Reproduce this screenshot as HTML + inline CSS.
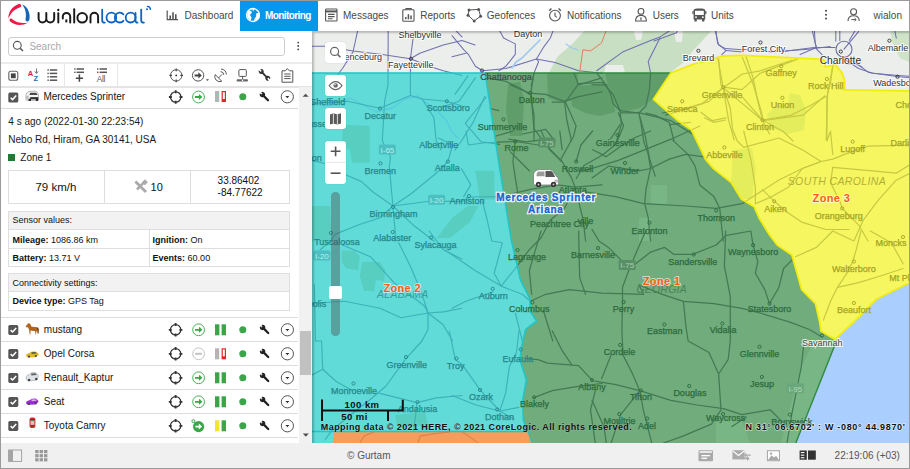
<!DOCTYPE html>
<html><head><meta charset="utf-8">
<style>
*{box-sizing:border-box;margin:0;padding:0}
html,body{width:910px;height:469px;overflow:hidden;background:#fff}
body{font-family:"Liberation Sans",sans-serif;font-size:10px;color:#333;position:relative}
.a{position:absolute}
.t{position:absolute;white-space:nowrap;line-height:10px;font-size:10px}
#frame{left:0;top:0;width:910px;height:469px;border:1px solid #9a9a9a;border-right:1px solid #9a9a9a;z-index:50;pointer-events:none}
#hdr{left:1px;top:1px;width:908px;height:30px;background:#fff}
.nav{color:#484848}
#side{left:1px;top:31px;width:311px;height:412px;background:#fff;overflow:hidden}
#map{left:312px;top:31px;width:597px;height:412px;background:#eceeec;overflow:hidden}
#foot{left:1px;top:443px;width:908px;height:25px;background:#f0f0f0}
.ln{position:absolute;background:#dcdcdc}
.cb{position:absolute;width:10px;height:10px;background:#555;border-radius:2px}
.cb svg{position:absolute;left:0;top:0}
.mbtn{position:absolute;background:#fff;border-radius:3px;box-shadow:0 0 1px rgba(0,0,0,.25)}
</style></head><body>
<div id="frame" class="a"></div>

<!-- HEADER -->
<div id="hdr" class="a">
</div>
<svg class="a" style="left:0;top:0" width="910" height="31" viewBox="0 0 910 31">
 <!-- logo mark -->
 <path d="M8.4,18.6 C8.2,11.6 12.6,6 18.8,4 C20.6,3.6 21.8,5.2 21,6.6 C20.6,7.4 19.8,7.6 19,7.8 C14,9.4 10.6,13.4 8.4,18.6 Z" fill="#ee1846"/>
 <path d="M22,4.2 C26.8,6.2 30,11.4 29.6,17.4 C29.6,19 29.2,21 27.6,21.4 C26.2,21.6 25.2,20.4 25.6,19 C26.6,14.2 25.6,8.6 22,4.2 Z" fill="#1565b8"/>
 <path d="M28.4,22.4 C22.6,25.8 15.4,26 10.2,21.6 C9.2,20.6 9.4,19 10.6,18.6 C11.4,18.4 12,18.8 12.6,19.4 C16.8,22.8 22.6,23.6 28.4,22.4 Z" fill="#ee1846"/>
 <!-- wordmark wialon -->
 <g fill="none" stroke="#1a1a1a" stroke-width="1.95" stroke-linecap="round">
  <path d="M38.6,12.9 V18.6 A3.85,3.85 0 0 0 46.3,18.6 V12.9 M46.3,18.6 A3.95,3.95 0 0 0 54.2,18.6 V12.9"/>
  <path d="M58.3,13.2 V22.4"/>
  <path d="M62.8,18.4 V16.6 A3.7,3.7 0 0 1 70.2,16.6 V22.4"/>
  <path d="M66.3,19.4 V22.4" stroke-width="2" stroke-linecap="butt"/>
  <path d="M74.2,9.2 V22.4"/>
  <circle cx="82.2" cy="17.8" r="4.8"/>
  <path d="M90.5,22.4 V16.6 A3.8,3.8 0 0 1 98.1,16.6 V22.4"/>
 </g>
 <circle cx="58.3" cy="10" r="1.15" fill="#1a1a1a"/>
 <g fill="none" stroke="#0f62c0" stroke-width="1.8" stroke-linecap="round">
  <path d="M102.2,9.6 V20.4 Q102.2,22.6 104.8,22.6"/>
  <circle cx="111.4" cy="17.6" r="4.9"/>
  <path d="M123.4,14.4 A4.9,4.9 0 1 0 123.4,20.8"/>
  <circle cx="130.6" cy="17.6" r="4.9"/>
  <path d="M135.5,12.8 V20.4 Q135.5,22.6 137.6,22.6"/>
  <path d="M141.2,9.6 V20.4 Q141.2,22.6 143.9,22.6"/>
  <path d="M147.4,6.4 A3.2,3.2 0 0 1 150.4,9.4" stroke-width="1.4"/>
 </g>
 <circle cx="147" cy="9.3" r="1" fill="#0f62c0"/>
 <!-- Dashboard icon -->
 <g fill="none" stroke="#555" stroke-width="1.2">
  <path d="M167.2,10.5 V19.6 H178"/>
  <path d="M170.2,19 V15.5 M173,19 V12.2 M175.8,19 V14.2" stroke-width="1.6"/>
 </g>
 <!-- monitoring tab -->
 <rect x="240" y="1" width="78" height="30" fill="#0597e9"/>
 <g fill="#fff">
  <circle cx="253" cy="15" r="6.5" fill="none" stroke="#fff" stroke-width="1.3"/>
  <path d="M248.6,10.6 C250,10.4 251.6,11 251.8,12.2 C252,13.4 250.6,13.6 250.2,14.6 C249.8,15.6 251,16.2 251.4,17.2 C251.6,18.2 251,19.6 250.6,20.6 C249,19.6 247.6,18 247.2,16 C247,14 247.6,12 248.6,10.6 Z"/>
  <path d="M254.6,9 C256.4,9.4 258,10.8 258.8,12.4 C258,13 257,12.6 256.4,13.4 C255.8,14.2 256.6,15.4 256,16.6 C255.6,17.6 254.6,18.2 254.4,19.4 L254,21.2 C256.8,20.8 258.8,18.6 259.4,16 C259.6,14.6 259.4,13.4 258.8,12.4 Z"/>
  <path d="M253.2,8.6 C254,8.8 254.4,9.8 253.8,10.4 C253.2,11 252.6,10.6 252.4,9.8 Z"/>
 </g>
 <!-- messages icon -->
 <g fill="none" stroke="#555" stroke-width="1.1">
  <rect x="325.6" y="9" width="11.4" height="12" rx="0.8"/>
  <path d="M325.6,11.4 H337" stroke-width="2"/>
  <path d="M328,14.4 H334.6 M328,16.6 H334.6 M328,18.8 H332.6"/>
 </g>
 <!-- reports icon -->
 <g fill="none" stroke="#555" stroke-width="1.1">
  <rect x="402.8" y="9.8" width="11.2" height="11.4" rx="0.8"/>
  <path d="M406,9.8 V8.6 H411.2 V9.8"/>
  <path d="M405.8,19.2 V17 M408.4,19.2 V14.2 M411,19.2 V15.6" stroke-width="1.5"/>
 </g>
 <!-- geofences icon -->
 <g fill="none" stroke="#555" stroke-width="1">
  <path d="M469,10 L478.6,9.4 L480.6,16.2 L474.2,21 L468,15.2 Z"/>
 </g>
 <g fill="#555">
  <circle cx="469" cy="10" r="1.5"/><circle cx="478.6" cy="9.4" r="1.5"/><circle cx="480.6" cy="16.2" r="1.5"/><circle cx="474.2" cy="21" r="1.5"/><circle cx="468" cy="15.2" r="1.5"/>
 </g>
 <!-- notifications icon -->
 <g fill="none" stroke="#555" stroke-width="1.1">
  <circle cx="555" cy="15.6" r="5.4"/>
  <path d="M555,12.6 V15.8 L556.8,17.4"/>
  <path d="M549.2,10.8 L551.4,8.6 M560.8,10.8 L558.6,8.6" stroke-width="1.4"/>
 </g>
 <!-- users icon -->
 <g fill="none" stroke="#555" stroke-width="1.1">
  <circle cx="641" cy="11.4" r="2.9"/>
  <path d="M635.6,21 C635.6,17.6 637.8,15.4 641,15.4 C644.2,15.4 646.4,17.6 646.4,21 Z"/>
 </g>
 <path d="M640.2,17.4 H641.8 L641.4,20.4 H640.6 Z" fill="#555"/>
 <!-- units icon -->
 <g fill="#555">
  <path d="M693.6,10.6 C693.6,9 695,8.6 699.4,8.6 C703.8,8.6 705.2,9 705.2,10.6 V19.4 H693.6 Z M695,10.8 V15 H703.8 V10.8 Z"/>
  <rect x="694.4" y="19" width="2.4" height="2.6" rx="0.6"/><rect x="702" y="19" width="2.4" height="2.6" rx="0.6"/>
  <rect x="692.4" y="11" width="1.2" height="3.2"/><rect x="705.2" y="11" width="1.2" height="3.2"/>
  <circle cx="696" cy="17.2" r="0.9" fill="#fff"/><circle cx="702.8" cy="17.2" r="0.9" fill="#fff"/>
 </g>
 <!-- kebab -->
 <g fill="#444"><circle cx="826" cy="10.8" r="1"/><circle cx="826" cy="14.7" r="1"/><circle cx="826" cy="18.6" r="1"/></g>
 <!-- user icon -->
 <g fill="none" stroke="#555" stroke-width="1.1">
  <circle cx="853.6" cy="11.8" r="3"/>
  <path d="M848,21 C848,17.8 850.2,15.8 853.6,15.8 C857,15.8 859.2,17.8 859.2,21"/>
  <path d="M851.4,19.6 H856 M854.6,18.2 L856.2,19.6 L854.6,21" stroke-width="1"/>
 </g>
</svg>
<div class="t nav" style="left:184.5px;top:11px">Dashboard</div>
<div class="t" style="left:265px;top:11px;color:#fff;font-weight:bold;letter-spacing:-0.6px">Monitoring</div>
<div class="t nav" style="left:343px;top:11px">Messages</div>
<div class="t nav" style="left:420.3px;top:11px">Reports</div>
<div class="t nav" style="left:486.8px;top:11px">Geofences</div>
<div class="t nav" style="left:567px;top:11px">Notifications</div>
<div class="t nav" style="left:652.7px;top:11px">Users</div>
<div class="t nav" style="left:711px;top:11px">Units</div>
<div class="t nav" style="left:873.6px;top:11px">wialon</div>

<!-- SIDEBAR -->
<div id="side" class="a">
</div>
<div class="a" style="left:8px;top:37px;width:277px;height:19px;border:1px solid #cdcdcd;border-radius:3px;background:#fff"></div>
<div class="t" style="left:29.4px;top:42px;color:#a8a8a8">Search</div>
<div class="ln" style="left:1px;top:62px;width:311px;height:2px;background:#ececec"></div>
<div class="ln" style="left:1px;top:86px;width:311px;height:1.5px;background:#e4e4e4"></div>
<div class="ln" style="left:63.5px;top:63px;width:1.2px;height:24px;background:#e6e6e6"></div>
<div class="ln" style="left:117px;top:63px;width:1.2px;height:24px;background:#e6e6e6"></div>
<div class="ln" style="left:1px;top:107.5px;width:297px;height:1px;background:#dadada"></div>
<div class="ln" style="left:1px;top:317px;width:297px;height:1px;background:#dcdcdc"></div>
<div class="ln" style="left:1px;top:341px;width:297px;height:1px;background:#dcdcdc"></div>
<div class="ln" style="left:1px;top:365px;width:297px;height:1px;background:#dcdcdc"></div>
<div class="ln" style="left:1px;top:389px;width:297px;height:1px;background:#dcdcdc"></div>
<div class="ln" style="left:1px;top:413px;width:297px;height:1px;background:#dcdcdc"></div>
<div class="ln" style="left:1px;top:437px;width:297px;height:1px;background:#dcdcdc"></div>
<div class="a" style="left:298.5px;top:87px;width:13px;height:356px;background:#f1f1f1"></div>
<div class="a" style="left:300.2px;top:331px;width:10.7px;height:43.5px;background:#c1c1c1"></div>
<div class="t" style="left:43.4px;top:92px;color:#151515">Mercedes Sprinter</div>
<div class="t" style="left:8.3px;top:117.1px;color:#1a1a1a">4 s ago (2022-01-30 22:23:54)</div>
<div class="t" style="left:8.3px;top:135px;color:#1a1a1a">Nebo Rd, Hiram, GA 30141, USA</div>
<div class="a" style="left:8.4px;top:154px;width:6.6px;height:6.6px;background:#1f7a33"></div>
<div class="t" style="left:20.3px;top:153px;color:#1a1a1a">Zone 1</div>
<div class="a" style="left:8px;top:170px;width:282px;height:34px;border:1px solid #dedede"></div>
<div class="ln" style="left:104px;top:170px;width:1px;height:34px;background:#dedede"></div>
<div class="ln" style="left:190px;top:170px;width:1px;height:34px;background:#dedede"></div>
<div class="t" style="left:35.4px;top:181.5px;font-size:11.5px;line-height:11.5px;color:#111">79 km/h</div>
<div class="t" style="left:150.6px;top:181.5px;font-size:11px;line-height:11px;color:#111">10</div>
<div class="t" style="left:217.6px;top:176.4px;color:#111">33.86402</div>
<div class="t" style="left:217.6px;top:188px;color:#111">-84.77622</div>
<div class="a" style="left:8px;top:211px;width:282px;height:56px;border:1px solid #dedede"></div>
<div class="a" style="left:9px;top:212px;width:280px;height:18px;background:#f2f2f2;border-bottom:1px solid #dedede"></div>
<div class="ln" style="left:9px;top:248px;width:280px;height:1px;background:#dedede"></div>
<div class="ln" style="left:149px;top:230px;width:1px;height:36px;background:#dedede"></div>
<div class="t" style="left:12.4px;top:215.4px;font-size:9px;color:#111">Sensor values:</div>
<div class="t" style="left:12.4px;top:234.5px;font-size:9px;color:#111"><b>Mileage:</b> 1086.86 km</div>
<div class="t" style="left:152.6px;top:234.5px;font-size:9px;color:#111"><b>Ignition:</b> On</div>
<div class="t" style="left:12.4px;top:252.5px;font-size:9px;color:#111"><b>Battery:</b> 13.71 V</div>
<div class="t" style="left:152.6px;top:252.5px;font-size:9px;color:#111"><b>Events:</b> 60.00</div>
<div class="a" style="left:8px;top:273px;width:282px;height:38px;border:1px solid #dedede"></div>
<div class="a" style="left:9px;top:274px;width:280px;height:18px;background:#f2f2f2;border-bottom:1px solid #dedede"></div>
<div class="t" style="left:12.4px;top:277.8px;font-size:9px;color:#111">Connectivity settings:</div>
<div class="t" style="left:12.4px;top:295.8px;font-size:9px;color:#111"><b>Device type:</b> GPS Tag</div>
<div class="t" style="left:43.8px;top:325.2px;color:#151515">mustang</div>
<div class="t" style="left:43.8px;top:349.2px;color:#151515">Opel Corsa</div>
<div class="t" style="left:43.8px;top:373.2px;color:#151515">Renault_Kaptur</div>
<div class="t" style="left:43.8px;top:397.2px;color:#151515">Seat</div>
<div class="t" style="left:43.8px;top:421.2px;color:#151515">Toyota Camry</div>
<svg class="a" style="left:0;top:0" width="312" height="443" viewBox="0 0 312 443">
<circle cx="17.3" cy="45.3" r="3.9" fill="none" stroke="#555" stroke-width="1.1"/><path d="M20.2,48.2 L23,51" stroke="#555" stroke-width="1.5"/>
<g fill="#444"><circle cx="298.2" cy="42.6" r="0.9"/><circle cx="298.2" cy="46" r="0.9"/><circle cx="298.2" cy="49.4" r="0.9"/></g>
<rect x="8.8" y="71.3" width="9" height="9" rx="2" fill="none" stroke="#666" stroke-width="1.1"/><rect x="10.9" y="73.4" width="4.8" height="4.8" fill="#444"/>
<text x="27.8" y="75.8" font-family="Liberation Sans" font-weight="bold" font-size="7.6" fill="#e8194a">A</text><text x="33.6" y="80.9" font-family="Liberation Sans" font-weight="bold" font-size="7.4" fill="#1a70b0">Z</text><path d="M36.5,68.4 V73 M34.8,71.4 L36.5,73.4 L38.2,71.4" fill="none" stroke="#666" stroke-width="0.9"/>
<rect x="47.4" y="69.3" width="1.4" height="1.4" fill="#555"/><rect x="49.8" y="69.25" width="7.4" height="1.5" fill="#555"/>
<rect x="47.4" y="72.7" width="1.4" height="1.4" fill="#555"/><rect x="49.8" y="72.65" width="7.4" height="1.5" fill="#555"/>
<rect x="47.4" y="76.1" width="1.4" height="1.4" fill="#555"/><rect x="49.8" y="76.05" width="7.4" height="1.5" fill="#555"/>
<rect x="47.4" y="79.5" width="1.4" height="1.4" fill="#555"/><rect x="49.8" y="79.45" width="7.4" height="1.5" fill="#555"/>
<rect x="74.2" y="68.3" width="1.4" height="1.4" fill="#555"/><rect x="76.6" y="68.25" width="7.4" height="1.5" fill="#555"/>
<rect x="97" y="68.3" width="1.4" height="1.4" fill="#555"/><rect x="99.6" y="68.25" width="7.4" height="1.5" fill="#555"/>
<rect x="74.2" y="71.6" width="1.4" height="1.4" fill="#555"/><rect x="76.6" y="71.55" width="7.4" height="1.5" fill="#555"/>
<rect x="97" y="71.6" width="1.4" height="1.4" fill="#555"/><rect x="99.6" y="71.55" width="7.4" height="1.5" fill="#555"/>
<path d="M79.4,74.6 V81.8 M75.8,78.2 H83" stroke="#444" stroke-width="1.5"/>
<text x="96.8" y="81.5" font-family="Liberation Sans" font-size="8.2" fill="#555" letter-spacing="-0.3">All</text>
<circle cx="176.2" cy="75.4" r="5.7" fill="none" stroke="#555" stroke-width="1"/><circle cx="176.2" cy="75.4" r="0.9" fill="#333"/><path d="M176.2,68.6 V71.2 M176.2,79.6 V82.2 M169.4,75.4 H172 M180.4,75.4 H183" stroke="#444" stroke-width="1.2"/>
<circle cx="198.1" cy="75.4" r="5.7" fill="none" stroke="#555" stroke-width="1"/><path d="M194.6,74.4 H198.4 V72.2 L201.8,75.4 L198.4,78.6 V76.4 H194.6 Z" fill="#444"/><path d="M206,79.2 H209 L207.5,81 Z" fill="#444"/>
<path d="M215.2,74.6 A5,5 0 0 0 221.8,81.2 Z" fill="none" stroke="#555" stroke-width="1"/><path d="M218.4,78 L222,74.4" stroke="#555" stroke-width="1"/><path d="M220.6,71.6 A3.4,3.4 0 0 1 223.8,74.8 M221,69 A6,6 0 0 1 226.4,74.4" fill="none" stroke="#555" stroke-width="1"/>
<rect x="238.9" y="69.6" width="7.4" height="6.8" rx="0.8" fill="none" stroke="#555" stroke-width="1"/><path d="M242.6,76.4 V79" stroke="#555" stroke-width="1"/><rect x="236.6" y="79.2" width="11.4" height="2.4" rx="1" fill="#666"/><rect x="242" y="79.8" width="1.2" height="1.2" fill="#fff"/>
<g transform="translate(258.6,68.8)"><path d="M1.54,0.34 A2.5,2.5 0 1 1 0.34,1.54 L2.00,3.20 L3.20,2.00 Z M10.26,11.66 A2.5,2.5 0 1 1 11.46,10.46 L9.80,8.80 L8.60,10.00 Z" fill="#333"/><path d="M3,3 L8.8,9" stroke="#333" stroke-width="1.9"/></g>
<path d="M282,70.8 H285.4 L287.4,68.6 L289.4,70.8 H292.8 V82.2 H282 Z" fill="none" stroke="#555" stroke-width="1"/><path d="M284.2,74 H290.6 M284.2,76.3 H290.6 M284.2,78.6 H290.6" stroke="#555" stroke-width="1"/>
<path d="M302.6,96.8 H308.6 L305.6,93.8 Z" fill="#505050"/><path d="M302.8,433.6 H308.8 L305.8,436.8 Z" fill="#505050"/>
<g fill="#aaa"><path d="M134.4,182.4 L136.4,180.4 L147,191 L145,193 Z"/><path d="M136,188.6 L142.6,182 L144.4,183.8 L137.8,190.4 Z"/><rect x="142.8" y="180.2" width="4.2" height="4.2" transform="rotate(45 144.9 182.3)"/></g>
<rect x="8.3" y="92.5" width="10" height="10" rx="1.6" fill="#555"/><path d="M10.600000000000001,97.7 L12.600000000000001,99.6 L16.200000000000003,95.5" fill="none" stroke="#fff" stroke-width="1.5"/>
<g stroke="#333" fill="none" stroke-width="1.3"><circle cx="175.7" cy="97" r="5.2"/><path d="M175.7,90.2 V93.2 M175.7,100.8 V103.8 M168.9,97 H171.9 M179.49999999999997,97 H182.49999999999997" stroke-width="1.8"/></g>
<circle cx="198.5" cy="97" r="5.9" fill="none" stroke="#4cae5a" stroke-width="1"/><path d="M194.9,96.1 H198.9 V94 L202.3,97 L198.9,100 V97.9 H194.9 Z" fill="#3aa648"/>
<rect x="215" y="91" width="4.2" height="11" fill="#b4b4b4"/><rect x="221.6" y="91" width="4.4" height="11" fill="#ee2222"/><rect x="222.8" y="92.2" width="2" height="6.8" fill="#fff"/>
<circle cx="242.8" cy="96.8" r="3.5" fill="#3aa648"/>
<g transform="translate(259.59999999999997,91.80000000000001)"><path d="M1.55,0.35 A2.75,2.75 0 1 1 0.35,1.55 L2.20,3.40 L3.40,2.20 Z" fill="#222"/><path d="M2.8,2.8 L8.4,8.4" stroke="#222" stroke-width="2.3" stroke-linecap="round"/></g>
<circle cx="287.3" cy="96.8" r="6.1" fill="none" stroke="#555" stroke-width="1"/><path d="M285.3,95.89999999999999 H289.3 L287.3,98.2 Z" fill="#333"/>
<rect x="8.3" y="324.90000000000003" width="10" height="10" rx="1.6" fill="#555"/><path d="M10.600000000000001,330.1 L12.600000000000001,332.00000000000006 L16.200000000000003,327.90000000000003" fill="none" stroke="#fff" stroke-width="1.5"/>
<g stroke="#333" fill="none" stroke-width="1.3"><circle cx="175.6" cy="329.8" r="5.2"/><path d="M175.6,323.0 V326.0 M175.6,333.6 V336.6 M168.8,329.8 H171.8 M179.39999999999998,329.8 H182.39999999999998" stroke-width="1.8"/></g>
<circle cx="198.6" cy="329.8" r="5.9" fill="none" stroke="#4cae5a" stroke-width="1"/><path d="M195.0,328.90000000000003 H199.0 V326.8 L202.4,329.8 L199.0,332.8 V330.7 H195.0 Z" fill="#3aa648"/>
<rect x="215" y="324.3" width="4.4" height="11" fill="#3aa648"/><rect x="221.6" y="324.3" width="4.4" height="11" fill="#3aa648"/>
<circle cx="242.8" cy="329.8" r="3.5" fill="#3aa648"/>
<g transform="translate(259.8,324.59999999999997)"><path d="M1.55,0.35 A2.75,2.75 0 1 1 0.35,1.55 L2.20,3.40 L3.40,2.20 Z" fill="#222"/><path d="M2.8,2.8 L8.4,8.4" stroke="#222" stroke-width="2.3" stroke-linecap="round"/></g>
<circle cx="287.4" cy="329.8" r="6.1" fill="none" stroke="#555" stroke-width="1"/><path d="M285.4,328.90000000000003 H289.4 L287.4,331.2 Z" fill="#333"/>
<rect x="8.3" y="348.90000000000003" width="10" height="10" rx="1.6" fill="#555"/><path d="M10.600000000000001,354.1 L12.600000000000001,356.00000000000006 L16.200000000000003,351.90000000000003" fill="none" stroke="#fff" stroke-width="1.5"/>
<g stroke="#333" fill="none" stroke-width="1.3"><circle cx="175.6" cy="353.8" r="5.2"/><path d="M175.6,347.0 V350.0 M175.6,357.6 V360.6 M168.8,353.8 H171.8 M179.39999999999998,353.8 H182.39999999999998" stroke-width="1.8"/></g>
<circle cx="198.6" cy="353.8" r="5.9" fill="none" stroke="#c4c4c4" stroke-width="1"/><rect x="195.2" y="352.8" width="6.8" height="2" fill="#c4c4c4"/>
<rect x="215" y="348.3" width="4.2" height="11" fill="#b4b4b4"/><rect x="221.6" y="348.3" width="4.4" height="11" fill="#ee2222"/><rect x="222.8" y="349.5" width="2" height="6.8" fill="#fff"/>
<circle cx="242.8" cy="353.8" r="3.5" fill="#3aa648"/>
<g transform="translate(259.8,348.59999999999997)"><path d="M1.55,0.35 A2.75,2.75 0 1 1 0.35,1.55 L2.20,3.40 L3.40,2.20 Z" fill="#222"/><path d="M2.8,2.8 L8.4,8.4" stroke="#222" stroke-width="2.3" stroke-linecap="round"/></g>
<circle cx="287.4" cy="353.8" r="6.1" fill="none" stroke="#555" stroke-width="1"/><path d="M285.4,352.90000000000003 H289.4 L287.4,355.2 Z" fill="#333"/>
<rect x="8.3" y="372.90000000000003" width="10" height="10" rx="1.6" fill="#555"/><path d="M10.600000000000001,378.1 L12.600000000000001,380.00000000000006 L16.200000000000003,375.90000000000003" fill="none" stroke="#fff" stroke-width="1.5"/>
<g stroke="#333" fill="none" stroke-width="1.3"><circle cx="175.6" cy="377.8" r="5.2"/><path d="M175.6,371.0 V374.0 M175.6,381.6 V384.6 M168.8,377.8 H171.8 M179.39999999999998,377.8 H182.39999999999998" stroke-width="1.8"/></g>
<circle cx="198.6" cy="377.8" r="5.9" fill="none" stroke="#4cae5a" stroke-width="1"/><path d="M195.0,376.90000000000003 H199.0 V374.8 L202.4,377.8 L199.0,380.8 V378.7 H195.0 Z" fill="#3aa648"/>
<rect x="215" y="372.3" width="4.4" height="11" fill="#3aa648"/><rect x="221.6" y="372.3" width="4.4" height="11" fill="#3aa648"/>
<circle cx="242.8" cy="377.8" r="3.5" fill="#3aa648"/>
<g transform="translate(259.8,372.59999999999997)"><path d="M1.55,0.35 A2.75,2.75 0 1 1 0.35,1.55 L2.20,3.40 L3.40,2.20 Z" fill="#222"/><path d="M2.8,2.8 L8.4,8.4" stroke="#222" stroke-width="2.3" stroke-linecap="round"/></g>
<circle cx="287.4" cy="377.8" r="6.1" fill="none" stroke="#555" stroke-width="1"/><path d="M285.4,376.90000000000003 H289.4 L287.4,379.2 Z" fill="#333"/>
<rect x="8.3" y="396.90000000000003" width="10" height="10" rx="1.6" fill="#555"/><path d="M10.600000000000001,402.1 L12.600000000000001,404.00000000000006 L16.200000000000003,399.90000000000003" fill="none" stroke="#fff" stroke-width="1.5"/>
<g stroke="#333" fill="none" stroke-width="1.3"><circle cx="175.6" cy="401.8" r="5.2"/><path d="M175.6,395.0 V398.0 M175.6,405.6 V408.6 M168.8,401.8 H171.8 M179.39999999999998,401.8 H182.39999999999998" stroke-width="1.8"/></g>
<circle cx="198.6" cy="401.8" r="5.9" fill="none" stroke="#4cae5a" stroke-width="1"/><path d="M195.0,400.90000000000003 H199.0 V398.8 L202.4,401.8 L199.0,404.8 V402.7 H195.0 Z" fill="#3aa648"/>
<rect x="215" y="396.3" width="4.4" height="11" fill="#3aa648"/><rect x="221.6" y="396.3" width="4.4" height="11" fill="#3aa648"/>
<circle cx="242.8" cy="401.8" r="3.5" fill="#3aa648"/>
<g transform="translate(259.8,396.59999999999997)"><path d="M1.55,0.35 A2.75,2.75 0 1 1 0.35,1.55 L2.20,3.40 L3.40,2.20 Z" fill="#222"/><path d="M2.8,2.8 L8.4,8.4" stroke="#222" stroke-width="2.3" stroke-linecap="round"/></g>
<circle cx="287.4" cy="401.8" r="6.1" fill="none" stroke="#555" stroke-width="1"/><path d="M285.4,400.90000000000003 H289.4 L287.4,403.2 Z" fill="#333"/>
<rect x="8.3" y="420.90000000000003" width="10" height="10" rx="1.6" fill="#555"/><path d="M10.600000000000001,426.1 L12.600000000000001,428.00000000000006 L16.200000000000003,423.90000000000003" fill="none" stroke="#fff" stroke-width="1.5"/>
<g stroke="#333" fill="none" stroke-width="1.3"><circle cx="175.6" cy="425.8" r="5.2"/><path d="M175.6,419.0 V422.0 M175.6,429.6 V432.6 M168.8,425.8 H171.8 M179.39999999999998,425.8 H182.39999999999998" stroke-width="1.8"/></g>
<circle cx="198.6" cy="426.6" r="5.6" fill="#3aa648"/><path d="M195.4,425.7 H198.79999999999998 V423.6 L202.2,426.6 L198.79999999999998,429.6 V427.5 H195.4 Z" fill="#fff"/><circle cx="193.4" cy="421.2" r="1.5" fill="none" stroke="#3aa648" stroke-width="1"/><path d="M194.4,422.2 L196,423.8" stroke="#3aa648" stroke-width="1"/>
<rect x="215" y="420.3" width="4.4" height="11" fill="#f2e62a"/><rect x="221.6" y="420.3" width="4.4" height="11" fill="#3aa648"/>
<circle cx="242.8" cy="425.8" r="3.5" fill="#3aa648"/>
<g transform="translate(259.8,420.59999999999997)"><path d="M1.55,0.35 A2.75,2.75 0 1 1 0.35,1.55 L2.20,3.40 L3.40,2.20 Z" fill="#222"/><path d="M2.8,2.8 L8.4,8.4" stroke="#222" stroke-width="2.3" stroke-linecap="round"/></g>
<circle cx="287.4" cy="425.8" r="6.1" fill="none" stroke="#555" stroke-width="1"/><path d="M285.4,424.90000000000003 H289.4 L287.4,427.2 Z" fill="#333"/>
</svg>

<svg class="a" style="left:0;top:0" width="60" height="443" viewBox="0 0 60 443">
 <!-- van (mercedes) -->
 <g transform="translate(25.2,90.5)">
  <path d="M0.6,6.4 C0.6,3 2,1.2 5,0.8 L9.6,0.6 C11.2,0.6 12.2,1.6 12.8,3 L13.4,5.6 L13.4,8.6 C13.4,9.4 12.8,9.8 12,9.8 L1.6,9.8 C0.9,9.8 0.6,9 0.6,8 Z" fill="#f4f4f4" stroke="#8a8a8a" stroke-width="0.6"/>
  <path d="M5,2.2 L11.2,2.2 L12.4,4.6 L4.2,4.6 Z" fill="#4a4a4a"/>
  <path d="M1,5.4 L3.4,5 L3.4,9 L1,8.4 Z" fill="#bdbdbd"/>
  <rect x="5" y="6.6" width="8" height="2.2" fill="#333"/>
  <rect x="3.4" y="8.2" width="2.4" height="2.2" fill="#222"/><rect x="10.6" y="8.2" width="2.4" height="2.2" fill="#222"/>
 </g>
 <!-- horse -->
 <g transform="translate(25.4,323)">
  <path d="M0.2,3.4 L2.6,0.6 C3.4,0 4.4,0.4 5,1.2 L6,3.6 C7.6,4.2 10,4 11.6,4.2 C12.8,4.4 13.4,5.4 13.2,7 L13,10.6 L12.2,10.6 L12,7.8 L11,8.4 L10.6,11.4 L9.8,11.4 L9.8,8 C8,8.2 6.4,8 5.2,7.6 L5,11.4 L4.2,11.4 L3.8,7.2 C3.2,6 3,5 2.6,4.2 L1.2,4.6 Z" fill="#b0641c"/>
  <path d="M11.6,4.4 C12.6,4.6 13.2,5.6 13.2,7 L13,10.6 L12.4,10.6 L12.2,6.6 Z" fill="#5a2e0a"/>
  <rect x="4.2" y="10.2" width="1" height="1.2" fill="#ddd"/><rect x="9.8" y="10.2" width="1" height="1.2" fill="#ddd"/>
 </g>
 <!-- yellow car -->
 <g transform="translate(25.8,351)">
  <path d="M0.4,4.2 C0.4,3 2,2.2 4,1.8 L6,0.6 L10,0.6 L12.6,2.4 C13,3 13,4 12.4,4.6 L9,6.2 L2.6,6.4 C1,6.2 0.4,5.4 0.4,4.2 Z" fill="#e0b830"/>
  <path d="M5.6,1.2 L9.6,1 L11,2.6 L6,3 Z" fill="#5a5a5a"/>
  <circle cx="3.2" cy="5.6" r="1.1" fill="#444"/><circle cx="10" cy="5" r="1.1" fill="#444"/>
 </g>
 <!-- gray car -->
 <g transform="translate(25.7,372)">
  <path d="M0.4,5.6 C0.4,4 1.6,3 3.6,2.6 L5.6,0.8 L9.8,0.6 L12,2.4 C12.8,3 12.8,4.4 12.2,5.6 L11,8 L3,9 C1,8.8 0.4,7.4 0.4,5.6 Z" fill="#dfe3e8" stroke="#8a8e94" stroke-width="0.5"/>
  <path d="M5.4,1.4 L9.6,1.2 L11.2,3 L5.6,3.6 Z" fill="#606468"/>
  <circle cx="3.4" cy="8" r="1.3" fill="#444"/><circle cx="10.6" cy="7" r="1.3" fill="#444"/>
 </g>
 <!-- purple car -->
 <g transform="translate(25.7,398)">
  <path d="M0.4,4.6 C0.4,3.4 2,2.6 4,2.2 L6,0.8 L10,0.6 L12.4,2.4 C12.8,3 12.8,4 12.2,4.6 L9,6.4 L2.6,6.8 C1,6.6 0.4,5.8 0.4,4.6 Z" fill="#9a2ad0"/>
  <path d="M5.6,1.4 L9.6,1.2 L11,2.8 L6,3.2 Z" fill="#d8b0f0"/>
  <circle cx="3.2" cy="6" r="1.1" fill="#444"/><circle cx="10" cy="5.4" r="1.1" fill="#444"/>
 </g>
 <!-- red car top -->
 <g transform="translate(29.5,417.5)">
  <rect x="0" y="0" width="5.9" height="10.5" rx="2" fill="#d42a1e"/>
  <rect x="1" y="2.6" width="3.9" height="5.2" fill="#f2b8b0"/>
  <rect x="1" y="1.6" width="3.9" height="1.6" fill="#2a5a3a"/><rect x="1" y="7.4" width="3.9" height="1.4" fill="#2a5a3a"/>
 </g>
</svg>
<!-- MAP -->
<div id="map" class="a">
<svg class="a" style="left:0;top:0" width="597" height="412" viewBox="312 31 597 412">
<defs>
<clipPath id="cT"><polygon points="300.0,73.0 485.2,73.0 498.4,160.0 511.3,240.0 520.5,280.0 529.9,298.8 530.4,311.6 536.7,321.0 525.6,329.5 521.3,348.3 520.0,360.0 526.4,380.0 522.7,400.0 523.4,420.0 527.6,432.0 531.3,443.0 531.3,460.0 300.0,460.0"/></clipPath>
<clipPath id="cG"><polygon points="485.2,73.0 671.3,73.0 653.4,99.4 677.7,120.6 691.5,130.0 705.6,159.4 713.3,168.4 731.2,182.5 741.4,199.1 754.2,206.8 759.3,218.3 769.6,235.0 777.3,245.2 791.9,255.0 797.4,274.4 801.6,289.6 815.4,303.5 819.6,321.5 821.0,331.2 834.9,339.5 836.8,340.2 795.8,443.0 790.0,460.0 531.3,460.0 531.3,443.0 527.6,432.0 523.4,420.0 522.7,400.0 526.4,380.0 520.0,360.0 521.3,348.3 525.6,329.5 536.7,321.0 530.4,311.6 529.9,298.8 520.5,280.0 511.3,240.0 498.4,160.0 485.2,73.0"/></clipPath>
<clipPath id="cY"><polygon points="671.0,72.8 693.0,64.3 723.0,56.0 742.4,55.3 818.7,59.1 824.2,60.0 825.4,67.0 835.2,64.6 842.2,73.2 844.5,80.2 844.5,89.8 920.0,91.0 920.0,280.0 907.0,284.0 876.4,299.3 854.3,321.5 834.9,339.5 834.9,339.5 821.0,331.2 819.6,321.5 815.4,303.5 801.6,289.6 797.4,274.4 791.9,255.0 777.3,245.2 769.6,235.0 759.3,218.3 754.2,206.8 741.4,199.1 731.2,182.5 713.3,168.4 705.6,159.4 691.5,130.0 677.7,120.6 653.4,99.4"/></clipPath>
<g id="rd" fill="none" stroke-linejoin="round" stroke-linecap="round"><polyline points="388.2,25.0 388.0,85.0 384.6,101.3 382.3,141.0 390.5,156.8 389.3,166.2 392.9,206.0 395.2,231.8 395.2,241.0"/><polyline points="358.9,25.0 353.0,52.0 342.5,68.5 339.0,73.0 330.0,90.0"/><polyline points="305.0,46.2 326.0,46.2 353.0,51.0 382.3,54.4 410.4,58.7 419.8,53.3 443.2,45.0 462.0,40.4 475.0,45.0"/><polyline points="410.4,58.7 412.8,40.4 416.3,25.0"/><polyline points="410.4,58.7 410.4,94.3"/><polyline points="410.4,58.7 429.2,66.2 443.2,70.8 462.0,75.5"/><polyline points="450.3,25.0 462.0,36.9"/><polyline points="305.0,103.7 347.2,101.3 380.0,108.3 410.4,95.5 422.1,99.0 433.9,117.7 436.2,141.0 441.0,150.0"/><polyline points="422.1,99.0 446.8,101.3 462.0,106.0"/><polyline points="347.2,175.5 361.2,181.4 373.0,192.0 392.9,206.0"/><polyline points="305.0,159.1 326.0,163.8 347.2,175.5"/><polyline points="392.9,206.0 410.4,194.3 436.2,173.2 447.9,161.5 452.6,145.0 438.6,138.0"/><polyline points="392.9,206.0 429.2,201.3 462.0,201.3 470.7,197.0 498.9,196.6"/><polyline points="392.9,206.0 380.0,217.7 358.9,224.7 335.4,234.1 330.7,241.0 320.0,250.0"/><polyline points="392.9,206.0 412.8,224.7 433.9,241.0"/><polyline points="342.5,245.0 370.6,256.8 394.0,282.6 424.5,306.0 428.0,313.0"/><polyline points="398.7,242.7 410.4,266.2 422.1,294.3 428.0,313.0"/><polyline points="305.0,303.7 344.8,301.3 380.0,308.3 401.0,317.7 428.0,313.0 443.2,311.9 462.0,308.3"/><polyline points="428.0,313.0 428.0,329.4 421.9,341.0 405.1,359.7 386.0,386.0 369.3,400.3 347.8,417.0 331.1,431.3 325.0,440.0"/><polyline points="428.0,313.0 443.2,324.7 452.6,341.0"/><polyline points="429.2,231.0 443.2,249.7 462.0,259.1"/><polyline points="314.3,284.9 315.5,341.0 321.6,341.0 322.7,369.2 305.0,378.8"/><polyline points="322.7,369.2 335.9,381.2 352.6,390.7"/><polyline points="378.9,393.1 417.1,402.6 436.2,397.9 462.0,395.5"/><polyline points="449.3,331.0 455.3,359.7 462.0,364.4 480.7,390.7 499.8,411.0"/><polyline points="417.1,402.6 412.3,443.0"/><polyline points="466.0,131.0 468.4,145.0 484.8,142.7 515.3,141.5 538.7,145.0 545.7,142.7"/><polyline points="475.4,77.9 459.0,101.3 445.0,106.0"/><polyline points="484.8,96.6 473.1,122.4 461.4,141.0 455.0,150.0"/><polyline points="461.4,168.5 470.7,184.9 463.7,196.6"/><polyline points="482.5,201.3 487.2,220.0 491.8,241.0 502.4,242.7 494.2,273.2 501.2,286.1"/><polyline points="445.0,250.0 475.4,270.8 501.2,286.1 515.3,268.5 529.3,249.7 541.0,238.0 550.4,220.0 564.5,208.3 575.0,187.2"/><polyline points="501.2,286.1 522.3,294.3 530.5,301.3 545.7,294.3 569.2,289.6 602.0,293.1 643.6,294.3"/><polyline points="452.0,308.3 466.0,301.3 493.0,291.9"/><polyline points="515.3,313.0 522.3,341.0"/><polyline points="543.4,310.7 552.8,341.0"/><polyline points="518.9,331.0 516.5,352.5 509.3,366.8 505.7,393.1 499.8,411.0"/><polyline points="452.0,395.5 475.9,405.0 499.8,411.0 518.9,407.4"/><polyline points="499.8,411.0 514.1,419.4"/><polyline points="452.0,35.7 463.7,49.7 468.4,54.4 475.4,66.2 482.5,70.8 505.9,68.5 536.4,59.1 555.1,62.6 578.6,70.8 602.0,73.2"/><polyline points="452.0,56.8 466.0,53.3"/><polyline points="496.5,25.0 503.6,38.0 515.3,43.9 515.3,54.4 505.9,66.2 498.9,70.8"/><polyline points="536.4,59.1 543.4,47.4 550.4,38.0 555.1,25.0"/><polyline points="536.4,59.1 538.7,61.5 534.0,73.0 530.5,94.3 534.0,115.4 534.0,141.0"/><polyline points="596.7,70.8 622.5,52.1 650.6,40.4 660.0,36.9 678.7,25.0"/><polyline points="650.6,73.0 648.2,61.5 652.9,52.1 660.0,38.0"/><polyline points="713.9,25.0 718.6,45.0 725.6,48.6 742.0,49.7 778.9,52.1 814.0,47.4 835.1,47.4"/><polyline points="814.0,25.0 815.2,42.7 816.4,47.4 800.0,54.4"/><polyline points="839.8,25.0 839.8,40.4"/><polyline points="858.6,25.0 849.2,40.4"/><polyline points="844.5,59.1 858.6,68.5 872.6,73.2 898.4,75.5 915.0,76.7"/><polyline points="846.9,63.8 856.2,63.8 862.1,67.3"/><polyline points="510.6,84.9 529.3,93.1 545.7,94.3 564.5,101.3 578.6,96.6 602.0,91.9"/><polyline points="564.5,101.3 566.8,120.0 571.5,141.0"/><polyline points="573.9,73.0 578.6,84.9 602.0,77.9"/><polyline points="541.0,131.0 550.4,149.7 562.1,161.5 571.5,177.9 575.0,187.2 578.6,201.3 583.2,220.0 585.6,241.0"/><polyline points="515.3,141.5 512.9,161.5 515.3,177.9 517.6,191.9"/><polyline points="501.2,196.6 529.3,189.6 557.5,184.9 575.0,187.2 602.0,184.9"/><polyline points="576.2,161.5 580.9,145.0 592.6,131.0"/><polyline points="592.6,149.7 602.0,154.4 606.1,156.8 622.5,145.0 634.2,138.0 650.6,131.0"/><polyline points="510.6,152.1 522.3,163.8 529.3,170.8"/><polyline points="559.8,131.0 562.1,149.7"/><polyline points="596.7,73.0 606.1,84.9 610.7,94.3 613.1,103.7 620.1,110.7 621.3,124.7 616.6,141.0"/><polyline points="592.0,84.9 606.1,84.9"/><polyline points="620.1,110.7 638.9,113.0 645.9,106.0 649.4,89.6 650.6,73.0"/><polyline points="645.9,113.0 655.3,115.4 669.3,122.4 674.0,141.0 672.9,140.4 688.1,154.4 695.1,166.2 699.8,184.9 713.9,196.6 719.7,208.3 723.2,241.0"/><polyline points="638.9,113.0 641.2,124.7 643.6,141.0 648.2,154.4 650.6,168.5 645.9,189.6 644.7,203.7 648.2,217.7 650.6,241.0"/><polyline points="620.1,124.7 610.7,138.8"/><polyline points="669.3,124.7 690.4,122.4"/><polyline points="592.0,177.9 608.4,166.2 638.9,170.8 650.6,168.5 669.3,159.1 685.7,154.4 704.5,156.8"/><polyline points="585.6,191.9 615.4,196.6 643.6,203.7 685.7,206.0 716.2,208.3 742.0,203.7 778.9,180.0 802.3,168.5 821.1,161.5"/><polyline points="592.0,229.4 599.0,241.0 608.4,247.4 620.1,259.1 629.5,268.5 622.5,287.2 622.5,301.3 621.9,331.0 623.0,354.9 632.6,374.0 639.8,390.7 643.3,409.8 651.7,443.0"/><polyline points="629.5,268.5 650.6,252.1 664.7,247.4 674.0,254.4 692.8,254.4 716.2,245.0 725.6,235.7 750.8,231.0 753.1,245.1 757.8,261.5 755.4,273.2 764.8,289.6 769.5,303.7"/><polyline points="629.5,268.5 636.5,252.1 643.6,235.7 645.9,231.0"/><polyline points="643.6,294.3 638.9,284.9 662.3,294.3 683.4,301.3 713.9,303.7 742.0,308.3 760.1,313.0 790.6,322.4 809.4,329.5 821.1,336.5"/><polyline points="683.4,301.3 685.7,324.7 688.1,341.0 709.0,352.5 718.6,374.0 721.0,409.8 711.4,424.1 682.8,436.1 663.6,443.0"/><polyline points="725.6,231.0 724.4,266.2 730.3,296.6 730.3,341.0 728.1,359.7 718.6,374.0"/><polyline points="611.1,354.9 601.6,378.8"/><polyline points="595.0,381.2 615.9,384.7 639.8,390.7 670.8,400.3 697.1,405.0 723.4,408.6 742.0,414.6 770.2,409.8 779.8,419.4 787.0,426.6"/><polyline points="639.8,390.7 620.7,414.6 611.1,443.0"/><polyline points="592.0,400.3 603.9,426.5 606.3,443.0"/><polyline points="526.0,358.5 538.0,359.7 547.5,363.2 578.6,365.6 592.9,381.2"/><polyline points="552.3,331.0 561.9,350.1 571.4,364.4"/><polyline points="533.2,397.9 552.3,390.7 581.0,385.9 602.0,383.5"/><polyline points="595.3,390.7 590.5,409.8 595.3,443.0"/><polyline points="578.6,231.0 579.7,277.9 585.6,294.3"/><polyline points="541.0,231.0 529.3,270.8 531.7,294.3"/><polyline points="792.9,259.1 783.6,268.5 778.9,287.3 769.5,303.7"/><polyline points="803.7,345.3 801.3,366.8 796.5,390.7 791.7,414.6 787.0,443.0"/><polyline points="746.3,417.0 732.0,426.6"/><polyline points="718.6,59.1 720.9,84.9 723.2,87.2 730.3,108.3 732.6,129.4 737.3,141.0 743.7,147.4"/><polyline points="662.3,113.0 685.7,108.3 709.2,101.3 723.2,87.2 742.0,89.6 760.1,73.2 797.6,59.1"/><polyline points="704.5,117.7 713.9,122.4 725.6,120.0"/><polyline points="746.1,56.8 753.1,77.9 757.8,101.3 762.5,120.1 769.5,134.1"/><polyline points="742.0,96.6 762.5,120.1 790.6,115.4 809.4,106.0 825.8,96.6"/><polyline points="832.8,65.0 830.5,82.6 826.9,96.6 826.9,141.0 830.5,131.0 832.8,154.4"/><polyline points="762.5,120.1 783.6,131.8 793.0,141.0"/><polyline points="743.7,147.4 778.9,138.0 802.3,149.8 821.1,161.5 832.8,159.1 844.5,154.4 868.0,146.2 915.0,145.0"/><polyline points="821.1,161.5 802.3,168.5 788.3,187.3 771.9,196.6 755.4,203.7"/><polyline points="832.8,167.3 872.6,170.8 896.1,173.2 915.0,161.5"/><polyline points="832.8,167.3 830.5,182.6 839.8,201.3 842.2,208.4 858.6,224.8 868.0,241.0"/><polyline points="915.0,170.8 896.1,180.2 877.3,201.3 863.3,220.1 853.9,241.0 832.8,231.0 816.4,247.4 795.3,256.8"/><polyline points="762.5,189.6 774.2,201.3 788.3,213.0 802.3,222.4 825.8,229.5 849.2,229.5"/><polyline points="743.7,131.0 750.8,159.1 755.4,187.3 755.4,203.7"/><polyline points="860.9,231.0 856.2,249.8 852.7,261.5 846.9,273.2 837.5,287.3 830.5,301.3 823.4,320.1"/><polyline points="837.5,287.3 858.6,282.6 882.0,275.5 903.1,268.5"/><polyline points="870.3,231.0 891.4,242.7 903.1,263.8"/><polyline points="487.1,77.8 505.9,81.4 522.3,89.5 529.3,94.2"/><polyline points="522.3,134.0 545.7,129.4 555.0,141.0"/><polyline points="489.5,108.3 498.8,110.6"/><polyline points="531.2,94.3 533.9,128.6 549.7,149.7 561.6,161.6"/><polyline points="552.3,102.2 565.5,102.2 576.1,126.0 573.5,136.5 560.3,160.3"/><polyline points="565.5,102.2 578.7,83.7 602.5,82.4 613.0,94.3 621.0,112.8 639.4,112.8 650.0,115.4"/><polyline points="618.3,112.8 623.6,126.0 615.7,144.4 602.5,155.0 584.0,165.5 576.1,178.7"/><polyline points="639.4,115.4 644.7,133.9 650.0,160.3 655.2,176.1"/><polyline points="650.0,115.4 671.1,120.7 692.2,133.9"/><polyline points="584.0,170.8 618.3,160.3 671.1,139.2 700.0,126.0"/><polyline points="508.8,139.2 526.0,141.8 547.1,139.2"/><polyline points="494.3,136.5 512.8,131.2"/><polyline points="533.9,73.0 531.2,86.4"/><polyline points="467.9,75.8 455.0,94.3"/><polyline points="486.4,97.0 465.3,123.3 481.1,141.8 499.6,144.4"/><polyline points="715.0,25.0 717.7,43.7 726.0,50.6 742.4,52.0"/><polyline points="726.0,50.6 721.8,54.7"/><polyline points="770.0,52.0 808.4,49.2 830.3,46.5"/><polyline points="811.0,25.0 816.6,49.2 822.0,54.7"/><polyline points="844.0,49.2 857.8,32.7 862.0,25.0"/><polyline points="835.8,25.0 835.8,41.0"/><polyline points="852.3,60.2 868.8,72.6 899.0,76.7 915.0,78.0"/><polyline points="893.5,25.0 896.3,38.2"/><polyline points="654.0,41.0 676.5,32.7 680.0,25.0"/><polyline points="723.2,87.7 717.7,57.5"/><polyline points="723.2,87.7 742.4,74.0 759.0,71.2 791.9,60.2"/><polyline points="723.2,87.7 739.7,101.4 763.0,120.7"/><polyline points="742.4,57.5 753.4,85.0 761.6,112.4 763.0,120.7"/><polyline points="763.0,120.7 802.9,115.2 824.8,95.9"/><polyline points="833.0,65.7 827.6,93.2 826.2,140.0"/><polyline points="665.5,115.2 701.2,104.2 723.2,87.7"/><polyline points="723.2,87.7 728.7,120.7 734.2,140.0"/><polyline points="701.2,112.4 712.2,120.7 726.0,117.9"/></g>
</defs>
<rect x="312" y="31" width="597" height="412" fill="#eceeec"/>
<polygon points="548.8,73.0 557.6,56.4 573.0,43.2 584.0,31.0 711.4,31.0 693.8,49.8 682.9,63.0 669.7,73.0" fill="#c9dfc3"/>
<polygon points="606,65 623,65 625,73 604,73" fill="#eceeec"/><polygon points="634,31 643,31 641,40 636,40" fill="#eceeec"/><polygon points="674,31 683,31 682,42 676,42" fill="#eceeec"/>
<polygon points="890,31 909,31 909,62 900,58 893,45" fill="#cfe3c8"/>
<use href="#rd" stroke="#7070b0" stroke-width="1.05"/>
<circle cx="844" cy="49.2" r="8" fill="none" stroke="#6c6ca6" stroke-width="1.1"/>
<polyline points="606,31 601.5,43 590.5,50.9 582.9,49.8 579.6,73" fill="none" stroke="#e0805a" stroke-width="1"/>
<polygon points="836.8,340.2 795.8,443.0 920.0,443.0 920.0,270.0 907.0,284.0 876.4,299.3 854.3,321.5 834.9,339.5" fill="#aacefe"/>
<polygon points="300.0,73.0 485.2,73.0 498.4,160.0 511.3,240.0 520.5,280.0 529.9,298.8 530.4,311.6 536.7,321.0 525.6,329.5 521.3,348.3 520.0,360.0 526.4,380.0 522.7,400.0 523.4,420.0 527.6,432.0 531.3,443.0 531.3,460.0 300.0,460.0" fill="#60dbd8"/>
<polygon points="485.2,73.0 671.3,73.0 653.4,99.4 677.7,120.6 691.5,130.0 705.6,159.4 713.3,168.4 731.2,182.5 741.4,199.1 754.2,206.8 759.3,218.3 769.6,235.0 777.3,245.2 791.9,255.0 797.4,274.4 801.6,289.6 815.4,303.5 819.6,321.5 821.0,331.2 834.9,339.5 836.8,340.2 795.8,443.0 790.0,460.0 531.3,460.0 531.3,443.0 527.6,432.0 523.4,420.0 522.7,400.0 526.4,380.0 520.0,360.0 521.3,348.3 525.6,329.5 536.7,321.0 530.4,311.6 529.9,298.8 520.5,280.0 511.3,240.0 498.4,160.0 485.2,73.0" fill="#70ac7c"/>
<polygon points="671.0,72.8 693.0,64.3 723.0,56.0 742.4,55.3 818.7,59.1 824.2,60.0 825.4,67.0 835.2,64.6 842.2,73.2 844.5,80.2 844.5,89.8 920.0,91.0 920.0,280.0 907.0,284.0 876.4,299.3 854.3,321.5 834.9,339.5 834.9,339.5 821.0,331.2 819.6,321.5 815.4,303.5 801.6,289.6 797.4,274.4 791.9,255.0 777.3,245.2 769.6,235.0 759.3,218.3 754.2,206.8 741.4,199.1 731.2,182.5 713.3,168.4 705.6,159.4 691.5,130.0 677.7,120.6 653.4,99.4" fill="#f6f660"/>
<g fill="#58ceC0"><polygon points="342.4,124.4 369.6,126 369.6,162.8 352,162.8 350,150 342.4,146"/><polygon points="341.7,251 354,250.6 359.8,256 358,270.4 346,268 341.7,262"/><polygon points="362,262 380,262 385.3,270 384,281 376,280 374,291 364,291 359.8,276"/><polygon points="475.2,170.8 494.4,170.8 494.4,199.6 480,199.6"/><polygon points="436.8,238 452,218 468,206 478.4,206 470,222 450,238"/><polygon points="312,206 330,206 332,241 312,241"/><polygon points="395,415 425,412 428,425 398,428"/></g>
<g fill="#5f9d6b"><polygon points="547,73 578,73 578,84 574,100 560,102 548,98"/><polygon points="571,86 613,84 615,112 600,116 585,113 572,106"/><polygon points="605,73 671,73 660,88 653,99 640,108 622,112 612,100 608,86"/><polygon points="508,84 520,82 524,100 522,136 510,136 506,110"/></g>
<g fill="#78b686"><polygon points="650.6,184.9 667,184.9 667,203.7 650.6,203.7"/><polygon points="638.9,217.7 650.6,217.7 650.6,241 638.9,241"/><polygon points="716,421 742,420 750,443 716,443"/><polygon points="812,345 836,341 796,443 781,443 792,400 801,368"/></g>
<g fill="#e4ee5c"><polygon points="790,93 800,95 806,110 804,130 788,134 770,128 767,115 775,106 788,103"/><polygon points="733,150 752,148 756,170 752,199 742,199 731,182"/></g>
<g fill="none" stroke-linecap="round" stroke-linejoin="round">
<polyline points="322,106 336,104 350,98 362,104 376,112 392,108 405,99 418,96 428,104 438,112 446,120 452,132 458,138" stroke="#52c4e0" stroke-width="1.3" opacity="0.7" clip-path="url(#cT)"/>
<polyline points="540,40 528,52 522,58 516,62 512,68" stroke="#9cc8f0" stroke-width="1.6"/>
<polyline points="566,44 572,48 578,50" stroke="#9cc8f0" stroke-width="1.2"/>
</g>
<use href="#rd" stroke="#3cb2b8" stroke-width="1.15" clip-path="url(#cT)"/>
<use href="#rd" stroke="#447a53" stroke-width="1.25" clip-path="url(#cG)"/>
<use href="#rd" stroke="#c8c842" stroke-width="1.2" clip-path="url(#cY)"/>
<polyline points="312.0,73.0 485.2,73.0 498.4,160.0 511.3,240.0 520.5,280.0 529.9,298.8 530.4,311.6 536.7,321.0 525.6,329.5 521.3,348.3 520.0,360.0 526.4,380.0 522.7,400.0 523.4,420.0 527.6,432.0 531.3,443.0" fill="none" stroke="#22c4c4" stroke-width="1.6"/>
<polyline points="485.2,73.0 671.3,73.0" fill="none" stroke="#2e8a3e" stroke-width="1.4"/>
<polyline points="836.8,340.2 795.8,443.0" fill="none" stroke="#2e8a3e" stroke-width="1.4"/>
<polygon points="671.0,72.8 693.0,64.3 723.0,56.0 742.4,55.3 818.7,59.1 824.2,60.0 825.4,67.0 835.2,64.6 842.2,73.2 844.5,80.2 844.5,89.8 920.0,91.0 920.0,280.0 907.0,284.0 876.4,299.3 854.3,321.5 834.9,339.5 834.9,339.5 821.0,331.2 819.6,321.5 815.4,303.5 801.6,289.6 797.4,274.4 791.9,255.0 777.3,245.2 769.6,235.0 759.3,218.3 754.2,206.8 741.4,199.1 731.2,182.5 713.3,168.4 705.6,159.4 691.5,130.0 677.7,120.6 653.4,99.4" fill="none" stroke="#f0ec10" stroke-width="1.8"/>
<polygon points="334.2,432.0 527.6,432.0 531.3,443.5 332.6,443.5" fill="#f69c5c"/>
<polyline points="312,431.6 527.6,431.6" stroke="#22c4c4" stroke-width="1.5" fill="none"/>
<g fill="none" stroke="#d0804a" stroke-width="1"><polyline points="360,443 364,436 374,432"/><polyline points="418,443 420,436 440,433 450,432"/><polyline points="462,432 470,437 478,443"/></g>
</svg>
<svg class="a" style="left:0;top:0" width="597" height="412" viewBox="312 31 597 412" font-family="Liberation Sans">
<g fill="none" stroke="#2d6a3d" stroke-width="0.9"><circle cx="623.7" cy="302" r="1.6"/><circle cx="620.1" cy="344.9" r="1.6"/><circle cx="664.4" cy="324.5" r="1.6"/><circle cx="722.4" cy="323.4" r="1.6"/><circle cx="689.2" cy="386" r="1.6"/><circle cx="640.9" cy="390.5" r="1.6"/><circle cx="592" cy="380.1" r="1.6"/><circle cx="534.2" cy="397.3" r="1.6"/><circle cx="532.4" cy="302.4" r="1.6"/><circle cx="517.5" cy="250" r="1.6"/><circle cx="598" cy="248" r="1.6"/><circle cx="693.8" cy="254.5" r="1.6"/><circle cx="619.2" cy="414" r="1.6"/><circle cx="647.2" cy="418.5" r="1.6"/><circle cx="723.1" cy="414" r="1.6"/><circle cx="530.4" cy="92.7" r="1.6"/><circle cx="503.5" cy="119.3" r="1.6"/><circle cx="515.3" cy="141.5" r="1.6"/><circle cx="576.2" cy="161.5" r="1.6"/><circle cx="617.5" cy="135" r="1.6"/><circle cx="625" cy="163" r="1.6"/><circle cx="716.2" cy="210.5" r="1.6"/><circle cx="649.4" cy="222.6" r="1.6"/><circle cx="753.1" cy="245.1" r="1.6"/><circle cx="769.5" cy="303.7" r="1.6"/><circle cx="759.5" cy="346.7" r="1.6"/><circle cx="761.9" cy="377" r="1.6"/><circle cx="789.7" cy="414.6" r="1.6"/><circle cx="822" cy="335.5" r="1.6"/></g>
<g fill="none" stroke="#24868a" stroke-width="0.9"><circle cx="520.7" cy="349.4" r="1.6"/><circle cx="492.7" cy="288.8" r="1.6"/><circle cx="480" cy="390" r="1.6"/><circle cx="497.2" cy="409.5" r="1.6"/><circle cx="456.5" cy="358.4" r="1.6"/><circle cx="380" cy="108.5" r="1.6"/><circle cx="446.8" cy="101.3" r="1.6"/><circle cx="447.9" cy="161.5" r="1.6"/><circle cx="380.5" cy="163.4" r="1.6"/><circle cx="393" cy="207" r="1.6"/><circle cx="392.8" cy="232" r="1.6"/><circle cx="431" cy="237.5" r="1.6"/><circle cx="469" cy="196" r="1.6"/><circle cx="331" cy="233" r="1.6"/><circle cx="406" cy="357" r="1.6"/><circle cx="417.5" cy="402" r="1.6"/><circle cx="353.5" cy="383.5" r="1.6"/></g>
<g fill="none" stroke="#333333" stroke-width="0.9"><circle cx="411" cy="58.7" r="1.6"/><circle cx="482" cy="70.5" r="1.6"/><circle cx="760.5" cy="42.5" r="1.6"/><circle cx="698.4" cy="50.8" r="1.6"/><circle cx="840.8" cy="51.6" r="1.6"/><circle cx="889.4" cy="40.7" r="1.6"/><circle cx="897.5" cy="76.7" r="1.6"/></g>
<g fill="none" stroke="#a4a424" stroke-width="0.9"><circle cx="781.2" cy="66.2" r="1.6"/><circle cx="826.9" cy="79" r="1.6"/><circle cx="723.2" cy="87.2" r="1.6"/><circle cx="782.4" cy="97.8" r="1.6"/><circle cx="682.2" cy="101.3" r="1.6"/><circle cx="762.5" cy="120.1" r="1.6"/><circle cx="852.7" cy="141.6" r="1.6"/><circle cx="724.4" cy="147.4" r="1.6"/><circle cx="774.2" cy="201.3" r="1.6"/><circle cx="842.2" cy="208.4" r="1.6"/><circle cx="853.9" cy="261.5" r="1.6"/><circle cx="853.9" cy="303" r="1.6"/><circle cx="903" cy="237" r="1.6"/></g>
<g font-size="9" fill="#333333" text-anchor="middle" stroke="#fff" stroke-width="2" stroke-opacity="0.85" paint-order="stroke"><text x="420" y="37.9">Shelbyville</text><text x="528" y="37.0">Dayton</text><text x="353.5" y="60.2">Lawrenceburg</text><text x="410.8" y="68.2">Fayetteville</text><text x="763.6" y="51.8">Forest City</text><text x="698.6" y="61.2">Brevard</text><text x="887.9" y="50.6">Albemarle</text><text x="896" y="85.8">Wadesboro</text></g>
<g font-size="9" fill="#24868a" text-anchor="middle" stroke="#24868a" stroke-width="0.25"><text x="327.8" y="104.9">Sheffield</text><text x="380.3" y="119.0">Decatur</text><text x="448.3" y="110.6">Scottsboro</text><text x="438.8" y="147.8">Albertville</text><text x="447.3" y="170.8">Attalla</text><text x="380.3" y="173.8">Bremen</text><text x="467" y="204.3">Anniston</text><text x="393.4" y="217.2">Birmingham</text><text x="337" y="244.7">Tuscaloosa</text><text x="392.3" y="241.2">Alabaster</text><text x="435.5" y="248.4">Sylacauga</text><text x="493.2" y="299.4">Auburn</text><text x="305" y="306.7">Demopolis</text><text x="406.7" y="367.8">Greenville</text><text x="455.6" y="369.2">Troy</text><text x="517.7" y="361.9">Eufaula</text><text x="354" y="393.7">Monroeville</text><text x="481" y="399.5">Ozark</text><text x="417.5" y="412.2">Andalusia</text><text x="499.5" y="420.1">Dothan</text><text x="304" y="160.7">Hamilton</text></g>
<g font-size="9" fill="#2d6a3d" text-anchor="middle" stroke="#2d6a3d" stroke-width="0.25"><text x="531.7" y="103.3">Dalton</text><text x="502.4" y="130.3">Summerville</text><text x="516.4" y="150.6">Rome</text><text x="577.4" y="171.7">Roswell</text><text x="572.7" y="192.8">Atlanta</text><text x="617.8" y="145.9">Gainesville</text><text x="624.8" y="174.0">Winder</text><text x="559.5" y="227.4">Peachtree City</text><text x="585.4" y="224.0">ville</text><text x="527" y="260.0">Lagrange</text><text x="593" y="257.8">Barnesville</text><text x="529.3" y="311.5">Columbus</text><text x="592" y="390.3">Albany</text><text x="534.4" y="407.0">Blakely</text><text x="716.2" y="220.9">Thomson</text><text x="649.4" y="233.8">Eatonton</text><text x="692.8" y="264.7">Sandersville</text><text x="753.1" y="255.3">Waynesboro</text><text x="623.6" y="311.5">Perry</text><text x="769.5" y="312.2">Statesboro</text><text x="664.7" y="333.8">Eastman</text><text x="723.2" y="332.6">Vidalia</text><text x="619.5" y="354.5">Cordele</text><text x="759.5" y="356.9">Glennville</text><text x="761.9" y="387.2">Jesup</text><text x="689.9" y="395.8">Douglas</text><text x="641" y="399.9">Tifton</text><text x="619.5" y="423.8">Moultrie</text><text x="646.9" y="428.5">Adel</text><text x="725.7" y="421.4">Waycross</text><text x="791.7" y="425.0">Brunswick</text></g>
<g font-size="9" fill="#a4a424" text-anchor="middle" stroke="#a4a424" stroke-width="0.25"><text x="781.2" y="76.4">Gaffney</text><text x="825.8" y="89.3">Rock Hill</text><text x="722.1" y="97.5">Greenville</text><text x="782.4" y="108.0">Union</text><text x="682.2" y="111.5">Seneca</text><text x="760.1" y="130.3">Clinton</text><text x="852.7" y="151.8">Lugoff</text><text x="724.4" y="157.6">Abbeville</text><text x="911" y="145.9">Darlington</text><text x="775.4" y="211.6">Aiken</text><text x="838.7" y="218.6">Orangeburg</text><text x="906" y="245.9">Moncks Corner</text><text x="853.9" y="271.7">Walterboro</text><text x="913" y="281.1">Mt Pleasant</text><text x="853.9" y="313.2">Beaufort</text><text x="911" y="108.2">Cheraw</text><text x="935" y="184.6">Lake City</text></g>
<text x="327" y="127" font-size="9" fill="#24868a" stroke="#24868a" stroke-width="0.25" text-anchor="end">Russe</text>
<text x="505.9" y="79.9" font-size="9" fill="#3a4a44" stroke="#3a4a44" stroke-width="0.2" text-anchor="middle">Chattanooga</text>
<text x="840.4" y="63.6" font-size="10.2" fill="#2a2a2a" stroke="#fff" stroke-width="1.6" stroke-opacity="0.7" paint-order="stroke" text-anchor="middle">Charlotte</text>
<text x="822.3" y="346.1" font-size="9" fill="#3a4a40" text-anchor="middle" stroke="#fff" stroke-width="2" stroke-opacity="0.8" paint-order="stroke">Savannah</text>
<g font-style="italic" font-size="9.5" text-anchor="middle">
<text x="402.8" y="298" fill="#3a9c9e" font-size="10.5" letter-spacing="0.3">ALABAMA</text>
<text x="661.7" y="292.6" fill="#4a8456" font-size="10.5" letter-spacing="0.2">GEORGIA</text>
<text x="836.9" y="184.8" fill="#b0b038" font-size="10.5" letter-spacing="0.35">SOUTH CAROLINA</text>
</g>
<rect x="378.9" y="144.5" width="17" height="10" rx="1.5" fill="#4cc0c0"/><text x="387.4" y="152.7" font-size="8" fill="#b8f0ee" text-anchor="middle">I-65</text>
<rect x="428.1" y="194.7" width="17" height="10" rx="1.5" fill="#4cc0c0"/><text x="436.6" y="202.89999999999998" font-size="8" fill="#b8f0ee" text-anchor="middle">I-20</text>
<rect x="313.4" y="250.5" width="17" height="10" rx="1.5" fill="#4cc0c0"/><text x="321.9" y="258.7" font-size="8" fill="#b8f0ee" text-anchor="middle">I-20</text>
<rect x="538.3" y="137.5" width="17" height="10" rx="1.5" fill="#588f66"/><text x="546.8" y="145.7" font-size="8" fill="#a8d0b0" text-anchor="middle">I-75</text>
<rect x="618.7" y="260" width="17" height="10" rx="1.5" fill="#588f66"/><text x="627.2" y="268.2" font-size="8" fill="#a8d0b0" text-anchor="middle">I-75</text>
<rect x="786.8" y="383.3" width="17" height="10" rx="1.5" fill="#6aa87c"/><text x="795.3" y="391.5" font-size="8" fill="#b0d8b8" text-anchor="middle">I-95</text>
<g font-weight="bold" font-size="11" fill="#fc5a16" stroke="#fff" stroke-width="1.8" stroke-opacity="0.6" paint-order="stroke" letter-spacing="0.35">
<text x="383.4" y="291.6">Zone 2</text><text x="642.8" y="284.9">Zone 1</text><text x="812.6" y="201.8">Zone 3</text>
</g>
<g font-weight="bold" font-size="10" fill="#fff" stroke="#fff" stroke-width="2.4" letter-spacing="0.75" text-anchor="middle">
<text x="546.2" y="200.9">Mercedes Sprinter</text><text x="545.8" y="212.7">Ariana</text>
</g>
<g font-weight="bold" font-size="10" fill="#1764d4" stroke="#1764d4" stroke-width="0.35" letter-spacing="0.75" text-anchor="middle">
<text x="546.2" y="200.9">Mercedes Sprinter</text><text x="545.8" y="212.7">Ariana</text>
</g>
<g transform="translate(532.5,169)">
<path d="M1,13 L1,7 C1,3 3,1 7,0.6 L17,0.6 C19,0.6 20.5,2 22,4.6 L24.6,8 C25.6,8.6 26,9.6 26,11 L26,14.6 C26,15.6 25.4,16 24.6,16 L2,16 C1.4,16 1,15 1,13 Z" fill="#fff" stroke="#777" stroke-width="0.8"/>
<path d="M13,2 L18,2 C19.4,2 20.4,3.4 21.4,5.4 L22.6,8 L13,8 Z" fill="#555"/>
<path d="M6,2.4 L12,2.4 L12,7.2 L4,7.2 C4,4.6 4.6,2.6 6,2.4 Z" fill="#9a9a9a"/>
<rect x="22" y="10.6" width="4" height="3" fill="#bbb"/>
<circle cx="6" cy="15.4" r="2.6" fill="#333"/><circle cx="21" cy="15.4" r="2.6" fill="#333"/>
<circle cx="6" cy="15.4" r="1" fill="#ccc"/><circle cx="21" cy="15.4" r="1" fill="#ccc"/>
</g>
<g stroke="#111" stroke-width="2" fill="none"><path d="M322,399.6 V421 M322,410.4 H403.6 M402.8,399.8 V410.4 M388,410.4 V421"/></g>
<g font-weight="bold" font-size="9.5" fill="#111" letter-spacing="0.45"><text x="344.6" y="408.4">100 km</text><text x="341.2" y="419.6">50 mi</text></g>
<text x="320.8" y="429.5" font-weight="bold" font-size="9" fill="#111" letter-spacing="0.42" stroke="#fff" stroke-width="0.6" stroke-opacity="0.4" paint-order="stroke">Mapping data © 2021 HERE, © 2021 CoreLogic. All rights reserved.</text>
<text x="745.6" y="429.8" font-weight="bold" font-size="9" fill="#111" letter-spacing="0.68" stroke="#fff" stroke-width="1.4" stroke-opacity="0.6" paint-order="stroke">N 31° 06.6702' : W -080° 44.9870'</text>
</svg>
<div class="mbtn" style="left:12.8px;top:10.6px;width:21.5px;height:21.5px"></div>
<div class="mbtn" style="left:13px;top:44px;width:21.3px;height:21.2px"></div>
<div class="mbtn" style="left:13px;top:77px;width:21.3px;height:21px"></div>
<div class="mbtn" style="left:12.9px;top:110.2px;width:21.4px;height:43.3px"></div>
<div class="a" style="left:19px;top:161.4px;width:8.6px;height:144px;border-radius:4.3px;background:rgba(80,80,80,0.42)"></div>
<div class="a" style="left:16.7px;top:254.7px;width:13.5px;height:13.3px;border-radius:2px;background:#fff"></div>
<svg class="a" style="left:0;top:0" width="60" height="160" viewBox="312 31 60 160">
<circle cx="334.6" cy="51.4" r="4" fill="none" stroke="#666" stroke-width="1.2"/><path d="M337.6,54.4 L340.4,57.2" stroke="#666" stroke-width="1.5"/>
<path d="M329.2,85.6 C331.4,82.6 333.6,81.6 335.6,81.6 C337.6,81.6 339.8,82.6 342,85.6 C339.8,88.6 337.6,89.6 335.6,89.6 C333.6,89.6 331.4,88.6 329.2,85.6 Z" fill="none" stroke="#666" stroke-width="1.1"/><circle cx="335.6" cy="85.4" r="2.2" fill="#666"/><circle cx="335" cy="84.8" r="0.7" fill="#fff"/>
<path d="M330,114.4 L333.4,113.2 L337.4,114.4 L341,113.2 L341,123.4 L337.4,124.6 L333.4,123.4 L330,124.6 Z" fill="#5a5a5a"/><path d="M333.4,113.4 V123.4 M337.4,114.4 V124.4" stroke="#fff" stroke-width="0.8"/>
<path d="M335.6,146.4 V156.2 M330.7,151.3 H340.5" stroke="#555" stroke-width="1.6"/>
<path d="M330.7,173.2 H340.5" stroke="#555" stroke-width="1.6"/>
<path d="M325.4,162.4 H346" stroke="#e4e4e4" stroke-width="0.8"/>
</svg>
<div class="a" style="left:0;top:0;width:597px;height:412px;box-shadow:inset 2px 2px 2px rgba(0,0,0,0.22)"></div>
</div>
<!-- FOOTER -->
<div id="foot" class="a">
</div>
<svg class="a" style="left:0;top:443px" width="910" height="26" viewBox="0 443 910 26">
 <rect x="8.6" y="450" width="13" height="11.4" fill="none" stroke="#a4a4a4" stroke-width="1"/><rect x="8.6" y="450" width="4.4" height="11.4" fill="#a4a4a4"/>
 <g fill="#999">
  <rect x="35.2" y="450" width="3.4" height="3.2"/><rect x="39.6" y="450" width="3.4" height="3.2"/><rect x="44" y="450" width="3.4" height="3.2"/>
  <rect x="35.2" y="454.1" width="3.4" height="3.2"/><rect x="39.6" y="454.1" width="3.4" height="3.2"/><rect x="44" y="454.1" width="3.4" height="3.2"/>
  <rect x="35.2" y="458.2" width="3.4" height="3.2"/><rect x="39.6" y="458.2" width="3.4" height="3.2"/><rect x="44" y="458.2" width="3.4" height="3.2"/>
 </g>
 <rect x="698.5" y="450.2" width="14.5" height="11" rx="0.8" fill="#aaa"/><rect x="699.6" y="451.3" width="12.3" height="1.4" fill="#fff"/><rect x="701.4" y="455" width="8.6" height="1.3" fill="#fff"/><rect x="701.4" y="457.6" width="5.6" height="1.3" fill="#fff"/>
 <path d="M732.4,450.2 H744.6 V459.4 H732.4 Z" fill="#aaa"/><path d="M732.4,450.6 L738.5,455.4 L744.6,450.6" fill="none" stroke="#fff" stroke-width="1.2"/>
 <path d="M742,457.6 H747 V455.8 L749.6,458.4 L747,461 V459.2 H742 Z" fill="#aaa"/><path d="M750.8,454.6 H746.4 V452.8 L744,455.2 L746.4,457.4 V455.8 H750.8 Z" fill="#aaa"/>
 <rect x="766.9" y="450.2" width="13.1" height="11" fill="#aaa"/><rect x="768" y="451.3" width="10.9" height="8.8" fill="#fff"/><path d="M768,460.1 L771.6,455.2 L774,457.6 L776.2,455.8 L778.9,460.1 Z" fill="#aaa"/><circle cx="771" cy="453.6" r="1.2" fill="#aaa"/>
 <rect x="799.6" y="450.5" width="7.2" height="9.2" fill="#333"/><rect x="808" y="450.5" width="7.8" height="9.2" fill="#333"/><rect x="800.8" y="452" width="3.6" height="1.1" fill="#fff"/><rect x="800.8" y="454.6" width="3.6" height="1.1" fill="#fff"/><rect x="800.8" y="457.2" width="3.6" height="1.1" fill="#fff"/>
 <text x="347" y="459" font-family="Liberation Sans" font-size="10" fill="#555">© Gurtam</text>
 <text x="834.6" y="459.3" font-family="Liberation Sans" font-size="10" fill="#555">22:19:06 (+03)</text>
</svg>
</body></html>
